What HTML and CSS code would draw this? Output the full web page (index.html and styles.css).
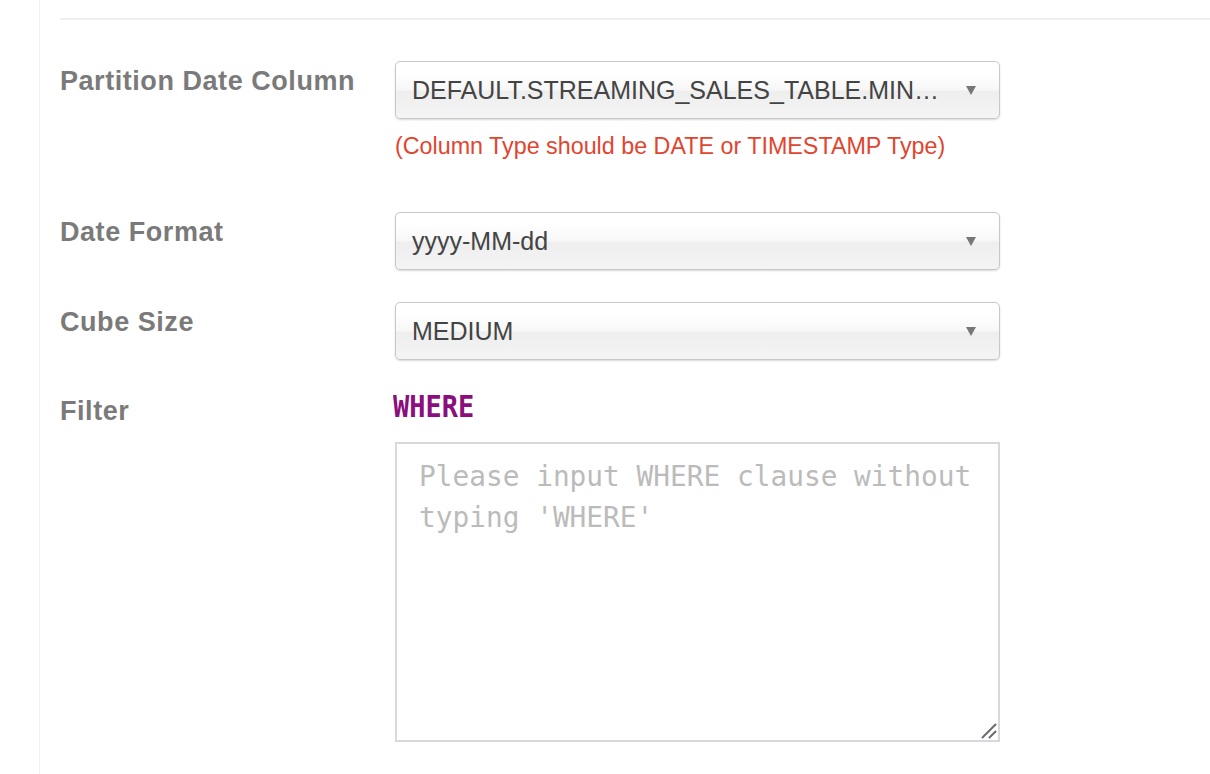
FILE: index.html
```html
<!DOCTYPE html>
<html>
<head>
<meta charset="utf-8">
<link rel="stylesheet" href="styles.css">
</head>
<body>
<div class="panel">
  <div class="content">
    <hr class="divider">
    <div class="row first">
      <div class="label">Partition Date Column</div>
      <div class="control">
        <div class="select"><span class="val">DEFAULT.STREAMING_SALES_TABLE.MIN…</span><span class="arrow"></span></div>
        <div class="error">(Column Type should be DATE or TIMESTAMP Type)</div>
      </div>
    </div>
    <div class="row r2">
      <div class="label">Date Format</div>
      <div class="control">
        <div class="select"><span class="val">yyyy-MM-dd</span><span class="arrow"></span></div>
      </div>
    </div>
    <div class="row r3">
      <div class="label">Cube Size</div>
      <div class="control">
        <div class="select"><span class="val">MEDIUM</span><span class="arrow"></span></div>
      </div>
    </div>
    <div class="row r4">
      <div class="label">Filter</div>
      <div class="control">
        <div class="where"><span class="kw">WHERE</span></div>
        <div class="area-wrap">
          <textarea class="filter" placeholder="Please input WHERE clause without typing 'WHERE'"></textarea>
          <svg class="grip" width="16" height="16" viewBox="0 0 16 16">
            <line x1="1.5" y1="14.5" x2="14.5" y2="1.5" stroke="#6b6b6b" stroke-width="2" stroke-linecap="round"/>
            <line x1="8.5" y1="14.5" x2="14.5" y2="8.5" stroke="#6b6b6b" stroke-width="2" stroke-linecap="round"/>
          </svg>
        </div>
      </div>
    </div>
  </div>
</div>
</body>
</html>
```
FILE: styles.css
```css
html, body {
  margin: 0;
  padding: 0;
  background: #fff;
}
body {
  width: 1210px;
  height: 774px;
  overflow: hidden;
  font-family: "Liberation Sans", Arial, sans-serif;
}
.panel {
  margin-left: 39px;
  border-left: 1px solid #f0f0f0;
  height: 774px;
}
.content {
  padding-left: 20px;
  padding-top: 18px;
}
.divider {
  margin: 0;
  border: 0;
  border-top: 2px solid #eeeeee;
}
.row {
  display: flex;
}
.row.first { margin-top: 41px; }
.row.r2 { margin-top: 52px; }
.row.r3 { margin-top: 32px; }
.row.r4 { margin-top: 31px; }
.label {
  width: 335px;
  font-size: 27px;
  font-weight: bold;
  color: #7a7a7a;
  padding-top: 6px;
  line-height: 28px;
  letter-spacing: 0.55px;
}
.control {
  width: 605px;
}
.select {
  box-sizing: border-box;
  height: 58px;
  width: 605px;
  border: 1px solid #c8c8c8;
  border-radius: 5px;
  background: linear-gradient(#ffffff 20%, #f7f7f7 50%, #eeeeee 52%, #f4f4f4 100%);
  box-shadow: 0 1px 2px rgba(0,0,0,0.15);
  display: flex;
  align-items: center;
  padding: 0 23px 0 16px;
}
.val {
  flex: 1;
  font-size: 25px;
  color: #444;
  white-space: nowrap;
}
.arrow {
  width: 0;
  height: 0;
  border-left: 5px solid transparent;
  border-right: 5px solid transparent;
  border-top: 9px solid #777;
}
.error {
  margin-top: 13px;
  font-size: 23.3px;
  color: #e2452f;
  line-height: 28px;
}
.where {
  line-height: 32px;
  height: 32px;
  margin-left: -2px;
}
.kw {
  display: inline-block;
  font-family: "DejaVu Sans Mono", monospace;
  font-weight: bold;
  font-size: 27px;
  color: #8b0e7c;
  letter-spacing: 0;
  transform: scaleX(1.0) scaleY(1.12);
  transform-origin: left center;
}
.area-wrap {
  position: relative;
  margin-top: 19px;
  width: 605px;
  height: 300px;
}
.filter {
  display: block;
  box-sizing: border-box;
  width: 605px;
  height: 300px;
  border: 2px solid #d6d9df;
  padding: 12px 22px;
  font-family: "DejaVu Sans Mono", monospace;
  font-size: 27.8px;
  line-height: 41px;
  color: #333;
  resize: none;
  outline: none;
  margin: 0;
}
.filter::placeholder {
  color: #bbbbbb;
}
.grip {
  position: absolute;
  right: 3px;
  bottom: 3px;
}
```
